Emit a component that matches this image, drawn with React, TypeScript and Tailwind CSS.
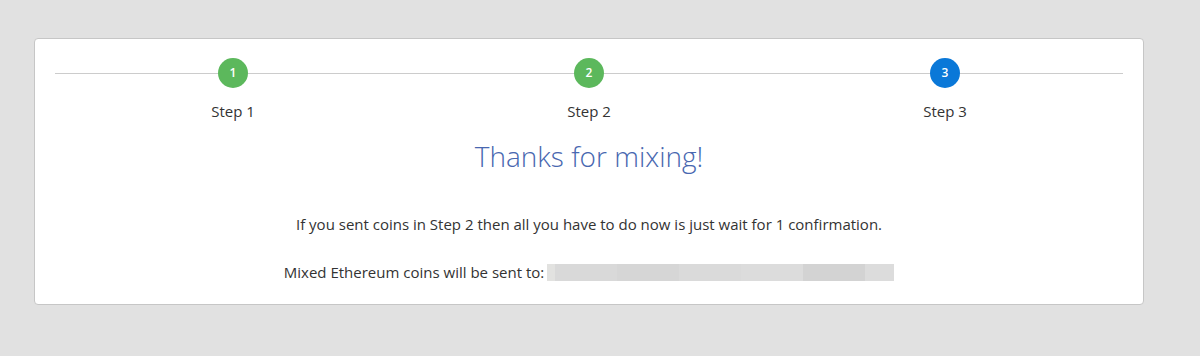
import React from "react"

const steps = [
  { n: 1, label: "Step 1", done: true },
  { n: 2, label: "Step 2", done: true },
  { n: 3, label: "Step 3", done: false },
]

const blurSegments = [
  { w: 8, c: "bg-[#e2e2e0]" },
  { w: 62, c: "bg-[#d9d9d9]" },
  { w: 62, c: "bg-[#d6d6d6]" },
  { w: 62, c: "bg-[#dadada]" },
  { w: 62, c: "bg-[#dcdcdc]" },
  { w: 62, c: "bg-[#d3d3d3]" },
  { w: 29, c: "bg-[#dcdcdc]" },
]

export default function App() {
  return (
    <div className="min-h-[356px] w-[1200px] bg-[#e1e1e1] pt-[38px] pl-[34px] font-['Open_Sans',sans-serif] text-[#333]">
      <div className="w-[1110px] h-[267px] bg-white border border-[#c6c6c6] rounded-[4px] px-[20px] pt-[19px]">
        {/* stepper */}
        <div className="relative">
          <div className="absolute left-0 right-0 top-[15px] h-px bg-[#cccccc]" />
          <div className="relative grid grid-cols-3">
            {steps.map((s) => (
              <div key={s.n} className="flex flex-col items-center">
                <div
                  className={`w-[30px] h-[30px] rounded-full flex items-center justify-center text-white text-[12px] font-semibold ${
                    s.done ? "bg-[#5cb85c]" : "bg-[#0a78d8]"
                  }`}
                >
                  {s.n}
                </div>
                <div className="mt-[13px] text-[15px] leading-[21px]">{s.label}</div>
              </div>
            ))}
          </div>
        </div>

        <h1 className="mt-[16px] text-center text-[28px] leading-[36px] font-light text-[#4867b0]">
          Thanks for mixing!
        </h1>

        <p className="mt-[39px] text-center text-[15px] leading-[22px]">
          If you sent coins in Step 2 then all you have to do now is just wait for 1 confirmation.
        </p>

        <div className="mt-[26px] flex items-center justify-center text-[15px] leading-[22px]">
          <span className="mr-[3px]">Mixed Ethereum coins will be sent to:</span>
          <span className="flex h-[17px]">
            {blurSegments.map((b, i) => (
              <span key={i} className={`h-full ${b.c}`} style={{ width: b.w }} />
            ))}
          </span>
        </div>
      </div>
    </div>
  )
}
